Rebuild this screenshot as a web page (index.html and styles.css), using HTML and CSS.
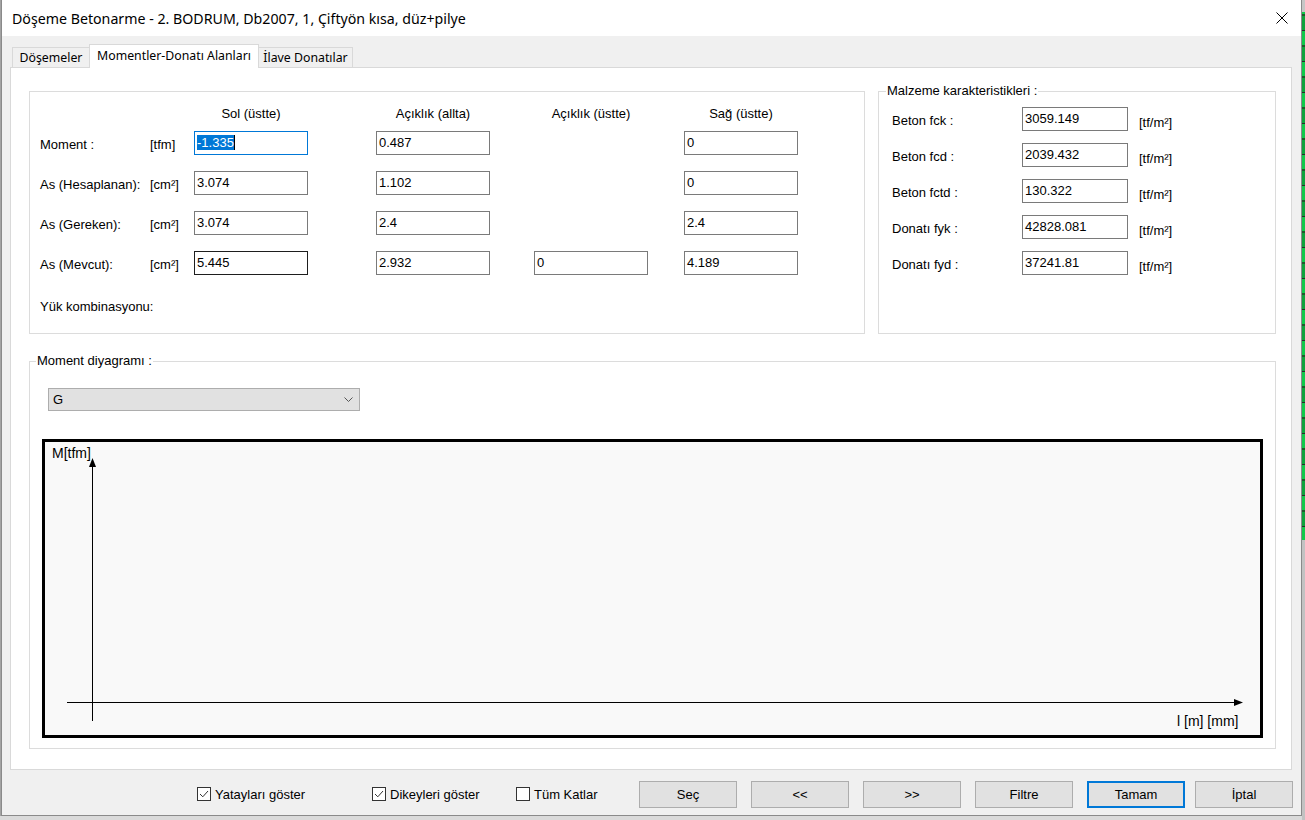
FILE: index.html
```html
<!DOCTYPE html>
<html lang="tr">
<head>
<meta charset="utf-8">
<title>Döşeme Betonarme</title>
<link rel="stylesheet" href="styles.css">
</head>
<body>
<div class="screen">
  <div class="edge-left"></div>
  <div class="dialog">
    <div class="titlebar">
      <div class="title">Döşeme Betonarme - 2. BODRUM, Db2007, 1, Çiftyön kısa, düz+pilye</div>
      <svg class="close" width="12" height="12" viewBox="0 0 12 12"><path d="M0.5 0.5 L11.5 11.5 M11.5 0.5 L0.5 11.5" stroke="#000" stroke-width="1" fill="none"/></svg>
    </div>
    <div class="client">
      <div class="tabs">
        <div class="tab tab-first">Döşemeler</div>
        <div class="tab tab-active">Momentler-Donatı Alanları</div>
        <div class="tab tab-last">İlave Donatılar</div>
      </div>
      <div class="panel">
        <div class="top-row">
          <div class="group g-values">
            <div class="vgrid vhead">
              <div></div><div></div>
              <div class="hcell">Sol (üstte)</div>
              <div class="hcell">Açıklık (allta)</div>
              <div class="hcell">Açıklık (üstte)</div>
              <div class="hcell">Sağ (üstte)</div>
            </div>
            <div class="vrows">
              <div class="vgrid vrow">
                <div class="lbl">Moment :</div><div class="lbl">[tfm]</div>
                <div class="field focus"><span class="sel">-1.335</span></div>
                <div class="field">0.487</div>
                <div></div>
                <div class="field">0</div>
              </div>
              <div class="vgrid vrow">
                <div class="lbl">As (Hesaplanan):</div><div class="lbl">[cm²]</div>
                <div class="field">3.074</div>
                <div class="field">1.102</div>
                <div></div>
                <div class="field">0</div>
              </div>
              <div class="vgrid vrow">
                <div class="lbl">As (Gereken):</div><div class="lbl">[cm²]</div>
                <div class="field">3.074</div>
                <div class="field">2.4</div>
                <div></div>
                <div class="field">2.4</div>
              </div>
              <div class="vgrid vrow">
                <div class="lbl">As (Mevcut):</div><div class="lbl">[cm²]</div>
                <div class="field dark">5.445</div>
                <div class="field">2.932</div>
                <div class="field">0</div>
                <div class="field">4.189</div>
              </div>
            </div>
            <div class="combo">Yük kombinasyonu:</div>
          </div>
          <div class="group g-mat">
            <span class="legend">Malzeme karakteristikleri :</span>
            <div class="mgrid">
              <div class="lbl">Beton fck :</div><div class="field">3059.149</div><div class="unit">[tf/m²]</div>
              <div class="lbl">Beton fcd :</div><div class="field">2039.432</div><div class="unit">[tf/m²]</div>
              <div class="lbl">Beton fctd :</div><div class="field">130.322</div><div class="unit">[tf/m²]</div>
              <div class="lbl">Donatı fyk :</div><div class="field">42828.081</div><div class="unit">[tf/m²]</div>
              <div class="lbl">Donatı fyd :</div><div class="field">37241.81</div><div class="unit">[tf/m²]</div>
            </div>
          </div>
        </div>
        <div class="group g-diagram">
          <span class="legend">Moment diyagramı :</span>
          <div class="select">
            <span>G</span>
            <svg width="9" height="5" viewBox="0 0 9 5"><path d="M0.5 0.5 L4.5 4.5 L8.5 0.5" stroke="#555" stroke-width="1" fill="none"/></svg>
          </div>
          <div class="canvas">
            <svg class="plot" width="1215" height="293" viewBox="0 0 1215 293">
              <line x1="47.5" y1="20" x2="47.5" y2="279" stroke="#000" stroke-width="1"/>
              <polygon points="47.5,16 44,25 51,25" fill="#000"/>
              <line x1="22" y1="260.5" x2="1192" y2="260.5" stroke="#000" stroke-width="1"/>
              <polygon points="1198,260.5 1189,257 1189,264" fill="#000"/>
              <text x="7" y="16" class="axis-label">M[tfm]</text>
              <text x="1132" y="284" class="axis-label">l [m] [mm]</text>
            </svg>
          </div>
        </div>
      </div>
      <div class="bottom-bar">
        <label class="check c1"><span class="box"><svg width="12" height="12" viewBox="0 0 12 12"><path d="M2 6 L4.8 8.8 L10 3" stroke="#333" stroke-width="1" fill="none"/></svg></span>Yatayları göster</label>
        <label class="check c2"><span class="box"><svg width="12" height="12" viewBox="0 0 12 12"><path d="M2 6 L4.8 8.8 L10 3" stroke="#333" stroke-width="1" fill="none"/></svg></span>Dikeyleri göster</label>
        <label class="check c3"><span class="box"></span>Tüm Katlar</label>
        <div class="buttons">
          <div class="btn">Seç</div>
          <div class="btn">&lt;&lt;</div>
          <div class="btn">&gt;&gt;</div>
          <div class="btn">Filtre</div>
          <div class="btn btn-default">Tamam</div>
          <div class="btn btn-last">İptal</div>
        </div>
      </div>
    </div>
  </div>
  <div class="edge-right"></div>
</div>
</body>
</html>
```
FILE: styles.css
```css
* { box-sizing: border-box; }

body {
  margin: 0;
  background: #dadada;
  font-family: "Liberation Sans", Arial, sans-serif;
  font-size: 13px;
  color: #000;
}

.screen {
  display: flex;
  width: 1305px;
  height: 820px;
  overflow: hidden;
}

.edge-left {
  width: 1px;
  height: 816px;
  background: #a3a3a3;
}

.edge-right {
  width: 3px;
  height: 820px;
  background:
    linear-gradient(to bottom, #c6c6c6 0 12px, rgba(0,0,0,0) 12px 540px, #c2c2c2 540px 820px),
    repeating-linear-gradient(to bottom, #12c84a 0 14px, #1e5a2b 14px 16px, #0fa23c 16px 30px, #2a2a2a 30px 31px);
}

.dialog {
  width: 1301px;
  height: 816px;
  border: 1px solid #8a8a8a;
  border-top: 0;
  background: #f0f0f0;
  display: flex;
  flex-direction: column;
}

/* title bar */
.titlebar {
  height: 36px;
  flex: none;
  background: #fff;
  display: flex;
  align-items: center;
  justify-content: space-between;
  padding: 0 13px 0 10px;
}

.title {
  font-family: "Segoe UI", "Noto Sans", "Open Sans", sans-serif;
  font-size: 14.2px;
  color: #000;
  white-space: nowrap;
}

.close { display: block; }

/* client area */
.client {
  flex: 1;
  display: flex;
  flex-direction: column;
}

.tabs {
  display: flex;
  align-items: flex-end;
  height: 23px;
  margin-top: 8px;
  padding-left: 10px;
}

.tab {
  height: 20px;
  border: 1px solid #d9d9d9;
  border-bottom: 0;
  background: #f0f0f0;
  font-family: "Segoe UI", "Noto Sans", "Open Sans", sans-serif;
  font-size: 12.3px;
  line-height: 19px;
  text-align: center;
  white-space: nowrap;
}

.tab-first { width: 77px; border-right: 0; }
.tab-last { width: 94px; border-left: 0; }

.tab-active {
  width: 170px;
  height: 24px;
  margin-bottom: -1px;
  background: #fff;
  line-height: 22px;
  position: relative;
  z-index: 1;
}

.panel {
  margin-left: 8px;
  width: 1282px;
  height: 703px;
  border: 1px solid #d9d9d9;
  background: #fff;
  padding: 23px 15px 20px 18px;
}

.top-row {
  display: flex;
  gap: 13px;
  height: 243px;
}

.group {
  border: 1px solid #dcdcdc;
  position: relative;
}

.legend {
  position: absolute;
  top: -9px;
  left: 6px;
  padding: 0 1px;
  background: #fff;
  line-height: 16px;
  white-space: nowrap;
}

.g-mat .legend { left: 7px; }

/* values table */
.g-values {
  width: 836px;
  padding: 14px 0 0 10px;
}

.vgrid {
  display: grid;
  grid-template-columns: 110px 44px 182px 158px 150px 114px;
}

.vhead {
  height: 16px;
  line-height: 16px;
  margin-bottom: 9px;
}

.hcell {
  width: 114px;
  text-align: center;
  white-space: nowrap;
}

.vrows {
  display: flex;
  flex-direction: column;
  gap: 16px;
}

.vrow { height: 24px; }

.lbl {
  padding-top: 6px;
  line-height: 16px;
  white-space: nowrap;
}

.field {
  width: 114px;
  height: 24px;
  border: 1px solid #7a7a7a;
  background: #fff;
  padding-left: 2px;
  line-height: 21px;
  white-space: nowrap;
  overflow: hidden;
}

.field.focus { border-color: #0078d7; }
.field.dark { border-color: #1e1e1e; }

.sel {
  background: #0078d7;
  color: #fff;
  border-right: 1px solid #000;
}

.combo {
  margin-top: 24px;
  line-height: 16px;
}

/* material group */
.g-mat {
  width: 398px;
  padding: 15px 0 0 13px;
}

.mgrid {
  display: grid;
  grid-template-columns: 130px 106px auto;
  row-gap: 12px;
  grid-auto-rows: 24px;
}

.mgrid .field { width: 106px; }

.unit {
  padding: 8px 0 0 11px;
  line-height: 16px;
  white-space: nowrap;
}

/* diagram group */
.g-diagram {
  margin-top: 27px;
  height: 388px;
  padding: 26px 12px 10px 12px;
}

.select {
  margin-left: 6px;
  width: 312px;
  height: 23px;
  border: 1px solid #adadad;
  background: #e1e1e1;
  display: flex;
  align-items: center;
  justify-content: space-between;
  padding: 0 6px 0 4px;
}

.select svg { display: block; }

.canvas {
  margin-top: 28px;
  height: 299px;
  border: 3px solid #000;
  background: #f9f9f9;
}

.plot { display: block; }

.axis-label {
  font-family: "Liberation Sans", Arial, sans-serif;
  font-size: 14px;
  fill: #000;
}

/* bottom bar */
.bottom-bar {
  height: 45px;
  padding: 11px 0 0 195px;
  display: flex;
  align-items: flex-start;
}

.check {
  height: 26px;
  display: flex;
  align-items: center;
  gap: 4px;
  white-space: nowrap;
}

.c1 { width: 175px; }
.c2 { width: 144px; }
.c3 { width: 123px; }

.box {
  width: 14px;
  height: 14px;
  border: 1px solid #333;
  background: #fff;
  display: flex;
  align-items: center;
  justify-content: center;
}

.box svg { display: block; }

.buttons {
  display: flex;
  gap: 14px;
}

.btn {
  width: 98px;
  height: 27px;
  border: 1px solid #adadad;
  background: #e1e1e1;
  display: flex;
  align-items: center;
  justify-content: center;
}

.btn-default { border: 2px solid #0078d7; }
.btn-last { margin-left: -4px; }
```
